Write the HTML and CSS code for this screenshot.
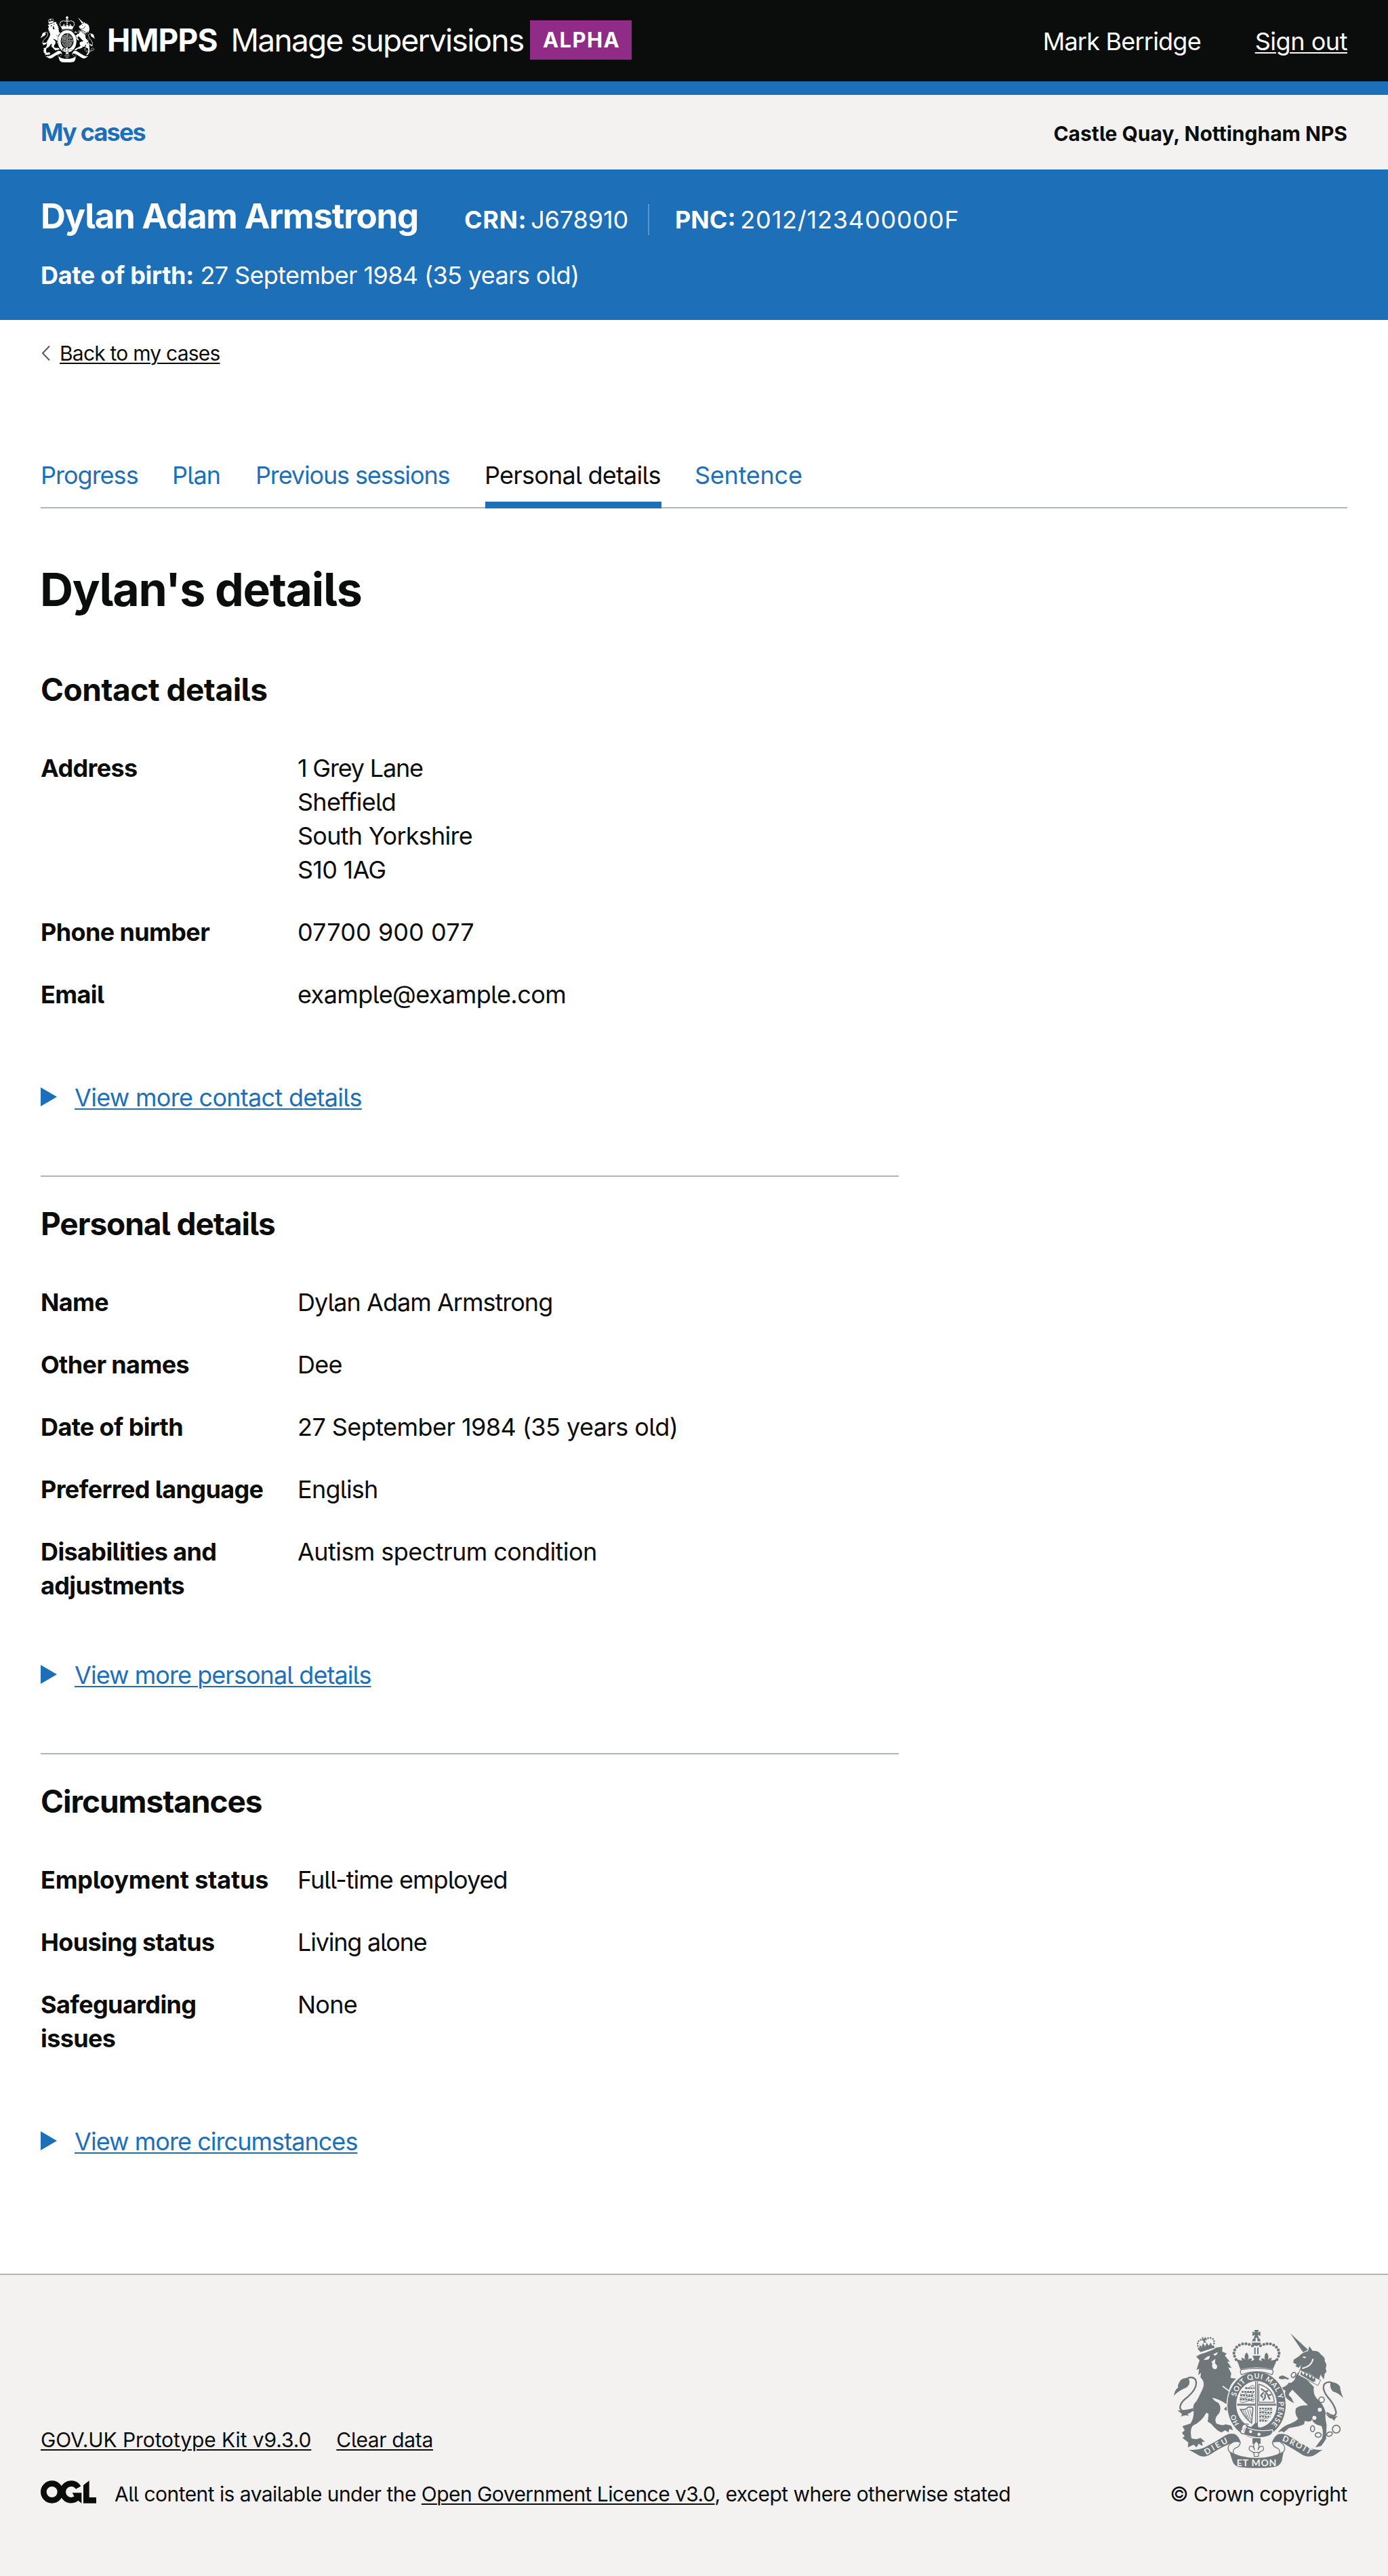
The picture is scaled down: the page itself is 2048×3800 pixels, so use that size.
FILE: index.html
```html
<!DOCTYPE html>
<html lang="en">
<head>
<meta charset="utf-8">
<title>Dylan's details - Manage supervisions</title>
<link rel="stylesheet" href="styles.css">
</head>
<body>
<svg class="sprite" aria-hidden="true">
  <symbol id="arms" viewBox="96 108 750 612" preserveAspectRatio="none">
    <!-- lion -->
    <g fill="currentColor">
      <path d="M195 226 L212 216 Q260 202 285 186 L311 182 L310 204 L330 212 L322 222 L345 250 L332 247 L352 277 L337 274 L350 300 L347 320 L372 324 Q346 345 340 375 L360 392 Q376 420 372 462 L358 452 L352 470 L340 458 L328 466 L318 458 L334 440 Q300 415 266 408 Q274 424 292 430 Q310 450 296 478 Q272 500 284 522 Q310 534 326 526 L350 532 L358 552 L342 546 L338 562 L324 552 L306 562 Q284 552 262 524 L246 514 L250 480 L240 474 Q220 514 180 532 Q166 548 174 588 L196 592 L214 586 L234 602 L220 604 L224 622 L206 612 L196 628 L184 616 L158 628 L160 606 L134 586 L144 578 L132 564 L144 552 L134 534 L170 522 Q184 500 184 470 Q176 440 196 424 Q204 410 222 372 Q238 340 214 318 L216 298 L204 308 L208 280 L196 286 L210 242 Z"/>
      <path d="M202 192 L272 176 L278 186 L214 206 Z"/>
      <path d="M96 400 Q100 372 116 362 Q108 358 126 330 Q148 314 163 326 Q172 348 150 364 Q112 380 96 400Z"/>
      <path d="M112 464 Q140 466 184 454 Q176 476 156 480 L164 488 Q144 482 128 492 L132 480 Z"/>
      <path d="M220 140 h6 v6 h6 v-6 h6 v6 l-3 4 v8 l5 6 h-14 l3 -8 -8 -2 v-6 z"/>
      <path d="M208 190 l4 -16 6 10 8 -18 8 16 8 -18 8 14 10 -14 6 16 z"/>
    </g>
    <g fill="none" stroke="currentColor">
      <path stroke-width="7" d="M190 462 Q136 478 124 456 Q120 430 158 404 Q206 362 192 328 Q178 310 152 324"/>
      <path stroke-width="8" stroke-linecap="round" stroke-dasharray="0 11" d="M206 190 Q194 160 214 152 Q226 148 232 160 Q240 140 262 144 Q280 150 272 178"/>
    </g>
    <g fill="var(--arms-gap)">
      <path d="M228 240 Q240 226 256 222 L252 236 Q240 242 228 240Z"/>
      <path d="M270 216 L290 206 Q290 216 278 222Z"/>
      <path d="M262 250 L280 236 L278 256 Q292 266 286 278 Q276 286 268 276 Q262 262 268 258Z"/>
    </g>
    <path fill="none" stroke="var(--arms-gap)" stroke-width="5" d="M312 357 Q340 376 362 398"/>
    <!-- unicorn -->
    <g fill="currentColor">
      <path d="M611 122 L690 196 L668 207 Z"/>
      <path d="M650 224 Q668 206 690 202 L696 180 L710 200 Q740 200 746 216 Q768 230 764 246 Q776 262 768 278 Q776 296 764 300 L760 328 L746 306 L738 330 Q700 296 658 290 Q652 280 660 262 L648 276 L634 268 L640 260 L625 254 L626 240 Z"/>
      <path d="M650 294 Q636 304 630 330 Q610 350 604 338 Q606 326 586 324 Q574 330 560 322 Q562 310 580 310 L612 326 Q600 360 574 362 Q570 372 590 376 L586 400 Q600 420 628 432 L616 408 L604 396 L620 372 L640 392 Q668 420 690 442 Q650 440 636 456 Q630 482 646 500 Q640 512 598 528 Q572 540 556 562 L574 556 L582 562 L606 542 Q652 536 672 526 L676 510 Q700 520 708 504 Q712 526 750 534 Q760 560 752 588 L722 628 L748 622 Q760 606 770 590 L772 528 Q764 494 768 474 Q760 440 738 420 Q710 400 716 360 Z"/>
      <path d="M790 340 Q820 338 832 360 Q832 376 846 410 Q826 386 800 380 Q784 364 790 340Z"/>
      <path d="M766 474 Q780 492 822 490 L812 498 L806 510 L796 500 Q784 504 766 474Z"/>
    </g>
    <path fill="none" stroke="currentColor" stroke-width="7" d="M772 474 Q816 502 814 470 Q806 436 776 404 Q748 364 764 346 Q780 332 802 344"/>
    <path fill="var(--arms-gap)" stroke="currentColor" stroke-width="3" d="M654 284 L746 330 L734 354 L646 308Z"/>
    <path fill="currentColor" d="M656 306 l4 -16 9 18 8 -14 6 20 9 -14 6 21 10 -12 4 17 10 -11 0 20 -10 3z"/>
    <path fill="none" stroke="var(--arms-gap)" stroke-width="6" d="M664 278 Q706 270 712 236 M668 228 l12 2"/>
    <g fill="none" stroke="currentColor" stroke-width="5">
      <ellipse cx="626" cy="307" rx="9" ry="12" transform="rotate(35 626 307)"/>
      <ellipse cx="710" cy="545" rx="9" ry="13"/>
      <ellipse cx="735" cy="573" rx="13" ry="10"/>
      <ellipse cx="785" cy="569" rx="13" ry="9" transform="rotate(-20 785 569)"/>
      <circle cx="815" cy="547" r="17"/>
      <circle cx="750" cy="417" r="12"/>
    </g>
    <g fill="var(--arms-gap)">
      <circle cx="608" cy="332" r="8"/><circle cx="617" cy="392" r="10"/>
      <circle cx="742" cy="461" r="9"/><circle cx="718" cy="497" r="9"/><circle cx="750" cy="417" r="9"/>
    </g>
    <!-- garter and shield -->
    <ellipse cx="462" cy="440" rx="133" ry="150" fill="var(--arms-gap)"/>
    <ellipse cx="462" cy="440" rx="129" ry="147" fill="currentColor"/>
    <ellipse cx="462" cy="438" rx="90" ry="104" fill="var(--arms-gap)"/>
    <g fill="none" stroke="currentColor" stroke-width="4">
      <path d="M458 336 V436 H376 M466 336 V436 H550 M458 542 V441 H376 M466 542 V441 H550"/>
      <path d="M472 348 V428 H541 Q536 366 472 348"/>
      <path stroke-width="8" stroke-dasharray="9 3" d="M412 366 h42 M396 382 h56 M390 398 h62 M388 416 h64 M474 456 h60 M474 474 h58 M474 492 h50 M474 510 h38"/>
      <path stroke-width="3" d="M414 360 q10 12 20 0 t20 0 M390 390 q12 10 24 0 t34 0 M388 407 q14 9 28 0 t34 0 M388 425 q14 9 28 0 t34 0 M474 465 q14 8 28 0 t30 0 M474 483 q14 8 28 0 t24 0 M474 501 q12 8 22 0 t18 0"/>
      <path stroke-width="7" d="M482 368 l20 14 12 -6 M494 384 l-12 14 8 10 M502 382 l12 16 14 -4 M500 390 l0 18 -10 12 M512 400 l10 16"/>
      <path stroke-width="5" d="M391 460 Q414 464 424 450 Q444 446 446 456 L440 520 Q412 500 391 460Z"/>
      <path stroke-width="3" d="M402 464 L420 496 M412 464 L428 504 M422 460 L436 508 M432 458 L440 490"/>
    </g>
    <path fill="currentColor" d="M456 520 h12 v16 l18 8 -16 10 h-20 l-18 -10z"/>
    <!-- belt end and buckle -->
    <path fill="currentColor" stroke="var(--arms-gap)" stroke-width="4" d="M414 538 Q470 562 532 550 Q540 560 524 574 Q480 596 404 572Z"/>
    <path fill="none" stroke="var(--arms-gap)" stroke-width="12" d="M414 530 q-18 10 -14 36"/>
    <path fill="none" stroke="currentColor" stroke-width="4" d="M428 526 q-30 -8 -34 12 q10 8 -4 14 q0 18 18 16 M424 536 q-10 12 -8 26"/>
    <circle cx="436" cy="558" r="7" fill="var(--arms-gap)"/><circle cx="473" cy="570" r="7" fill="var(--arms-gap)"/>
    <!-- crown -->
    <g fill="currentColor">
      <path d="M452 108 h20 l-5 12 12 -5 v20 l-12 -5 5 13 h-22 l5 -13 -11 5 v-20 l11 5z"/>
      <path d="M442 158 q4 -14 16 -16 v16z M466 158 v-16 q12 2 14 16z M440 164 h42 q-4 14 -21 15 q-17 -1 -21 -15z"/>
      <path d="M452 186 h6 v30 h-6z M465 186 h6 v30 h-6z"/>
      <path d="M372 238 L398 244 L394 232 Q404 230 412 240 Q404 222 418 208 Q432 222 424 240 Q432 230 442 236 L438 246 L452 240 L444 222 L480 222 L472 240 L486 246 L482 236 Q492 230 500 240 Q492 222 506 208 Q520 222 512 240 Q520 230 530 232 L526 244 L553 238 Q544 262 534 282 Q462 266 390 282 Q382 256 372 238Z"/>
    </g>
    <g fill="none" stroke="currentColor">
      <path stroke-width="13" stroke-linecap="round" stroke-dasharray="0 15" d="M444 178 Q418 164 392 172 Q362 186 362 214 Q364 226 372 240 M480 178 Q506 164 532 172 Q562 186 562 214 Q560 226 552 240"/>
      <path fill="var(--arms-gap)" stroke-width="4" d="M394 284 Q462 272 532 284 Q540 294 530 306 Q462 280 396 306 Q386 294 394 284Z"/>
    </g>
    <!-- motto ribbon -->
    <g fill="currentColor">
      <path d="M162 638 Q198 642 228 630 Q280 604 322 576 Q344 562 368 570 Q388 584 392 608 Q372 600 354 608 Q306 626 262 656 Q238 674 212 666 Z"/>
      <path d="M754 638 Q722 642 696 630 Q646 604 600 574 Q578 564 556 570 Q536 584 530 608 Q556 600 578 608 Q624 634 668 662 Q700 676 722 660 Z"/>
      <path d="M342 646 Q390 674 462 675 Q534 674 582 646 L574 688 Q564 712 540 715 Q462 724 384 715 Q360 708 354 684 Z"/>
      <path d="M444 588 h36 v24 h-36z"/>
    </g>
    <g fill="none" stroke="currentColor" stroke-width="4">
      <path d="M356 606 Q328 620 340 644 Q350 656 372 662 M390 604 Q390 626 366 632 Q352 644 364 658"/>
      <path d="M568 606 Q594 620 584 644 Q574 656 552 662 M532 604 Q534 626 556 632 Q572 644 560 658"/>
    </g>
    <path fill="var(--arms-gap)" stroke="currentColor" stroke-width="4" d="M461 600 Q480 614 468 640 Q478 616 490 624 Q500 640 484 644 Q476 648 472 652 L470 668 H452 L450 652 Q446 648 438 644 Q424 640 432 624 Q446 616 454 640 Q442 614 461 600Z"/>
    <path fill="none" stroke="currentColor" stroke-width="4" d="M444 650 H478"/>
  </symbol>
</svg>

<header class="header">
  <svg class="header-crest"><use href="#arms"/></svg>
  <span class="header-org">HMPPS</span>
  <span class="header-product">Manage supervisions</span>
  <strong class="tag">ALPHA</strong>
  <div class="header-account">
    <span class="user">Mark Berridge</span>
    <a class="sign-out" href="#">Sign out</a>
  </div>
</header>

<nav class="primary-nav">
  <a class="primary-link" href="#">My cases</a>
  <span class="office">Castle Quay, Nottingham NPS</span>
</nav>

<section class="banner">
  <div class="banner-row">
    <strong class="banner-name">Dylan Adam Armstrong</strong>
    <span class="banner-crn"><b>CRN:</b> <span>J678910</span></span>
    <span class="banner-pnc"><b>PNC:</b> <span>2012/123400000F</span></span>
  </div>
  <div class="banner-dob"><b>Date of birth:</b> <span>27 September 1984 (35 years old)</span></div>
</section>

<main class="main">
  <a class="back" href="#">
    <svg class="back-icon" viewBox="0 0 14 24"><path d="M13 1.5 L3 12 L13 22.500"/></svg>
    <span>Back to my cases</span>
  </a>

  <nav class="tabs">
    <a class="tab tab-progress" href="#">Progress</a>
    <a class="tab tab-plan" href="#">Plan</a>
    <a class="tab tab-sessions" href="#">Previous sessions</a>
    <a class="tab tab-personal tab-active" href="#">Personal details</a>
    <a class="tab tab-sentence" href="#">Sentence</a>
  </nav>

  <h1>Dylan's details</h1>

  <section class="group">
    <h2 class="h-contact">Contact details</h2>
    <dl>
      <dt>Address</dt><dd><span class="tighter">1 Grey Lane</span><br>Sheffield<br>South Yorkshire<br>S10 1AG</dd>
      <dt>Phone number</dt><dd class="digits">07700 900 077</dd>
      <dt>Email</dt><dd class="wide">example@example.com</dd>
    </dl>
    <a class="more" href="#"><span>View more contact details</span></a>
  </section>

  <section class="group group-compact">
    <h2 class="h-personal">Personal details</h2>
    <dl>
      <dt>Name</dt><dd class="tight">Dylan Adam Armstrong</dd>
      <dt>Other names</dt><dd>Dee</dd>
      <dt>Date of birth</dt><dd class="wide">27 September 1984 (35 years old)</dd>
      <dt>Preferred language</dt><dd>English</dd>
      <dt>Disabilities and adjustments</dt><dd class="wide">Autism spectrum condition</dd>
    </dl>
    <a class="more more-tight" href="#"><span>View more personal details</span></a>
  </section>

  <section class="group">
    <h2 class="h-circumstances">Circumstances</h2>
    <dl>
      <dt class="wide-label">Employment status</dt><dd class="tight">Full-time employed</dd>
      <dt>Housing status</dt><dd class="tighter">Living alone</dd>
      <dt>Safeguarding issues</dt><dd>None</dd>
    </dl>
    <a class="more more-tight" href="#"><span>View more circumstances</span></a>
  </section>
</main>

<footer class="footer">
  <div class="footer-meta">
    <div class="footer-links"><a class="kit" href="#">GOV.UK Prototype Kit v9.3.0</a><a class="clear" href="#">Clear data</a></div>
    <div class="licence">
      <svg class="ogl" viewBox="60 60 246 100" role="img" aria-label="OGL">
        <circle cx="110" cy="110" r="37" fill="none" stroke="currentColor" stroke-width="26"/>
        <path d="M227 91 A37 37 0 1 0 223 134" fill="none" stroke="currentColor" stroke-width="26"/>
        <path d="M200 114 H241 V160 L226 148 L212 136 Z M249 80 L275 60 V134 H306 V160 H249 Z" fill="currentColor"/>
      </svg>
      <span>All content is available under the <a href="#">Open Government Licence v3.0</a>, except where otherwise stated</span>
    </div>
  </div>
  <div class="copyright">
    <svg class="footer-crest" viewBox="96 108 750 612">
      <defs>
        <path id="garter-main" d="M371 404 A97 115 0 1 1 520 532"/>
        <path id="garter-start" d="M386 524 A97 115 0 0 1 364 456"/>
        <path id="ribbon-left" d="M240 662 Q290 630 345 602"/>
        <path id="ribbon-right" d="M574 598 Q636 622 704 664"/>
      </defs>
      <use href="#arms" x="96" y="108" width="750" height="612"/>
      <g class="motto">
        <text font-size="32"><textPath href="#garter-main" textLength="394">SOIT QUI MAL Y PENSE</textPath></text>
        <text font-size="30"><textPath href="#garter-start">HO</textPath></text>
        <text font-size="36"><textPath href="#ribbon-left" textLength="112">DIEU</textPath></text>
        <text font-size="36"><textPath href="#ribbon-right" textLength="138">DROIT</textPath></text>
        <text x="374" y="710" font-size="42" textLength="176">ET MON</text>
      </g>
    </svg>
    <span>© Crown copyright</span>
  </div>
</footer>
</body>
</html>
```
FILE: styles.css
```css
* { box-sizing: border-box; }

body {
  margin: 0;
  background: #fff;
  color: #0b0c0c;
  font: 400 36px/50px Inter, "Noto Sans", sans-serif;
  font-feature-settings: "cv05" 1;
  letter-spacing: -0.75px;
}

a {
  color: inherit;
  text-decoration-thickness: 2px;
  text-underline-offset: 3px;
}

.sprite { position: absolute; width: 0; height: 0; }

/* Header */
.header {
  --arms-gap: #0b0c0c;
  display: flex;
  align-items: flex-start;
  height: 140px;
  padding: 34px 60px 0;
  border-bottom: 20px solid #1d70b8;
  background: #0b0c0c;
  color: #fff;
  white-space: nowrap;
}
.header-crest { width: 80px; height: 68px; margin: -10px 18px 0 0; }
.header-org { width: 182.5px; font-size: 46px; font-weight: 700; letter-spacing: -0.84px; }
.header-product { width: 441.5px; font-size: 46px; letter-spacing: -1.7px; }
.tag {
  width: 150px;
  height: 58px;
  margin-top: -4px;
  padding-left: 19px;
  background: #912b88;
  font-size: 31px;
  line-height: 58px;
  letter-spacing: 1.4px;
}
.header-account { display: flex; margin: 2px 0 0 auto; }
.user { width: 313px; letter-spacing: -0.78px; }
.sign-out { letter-spacing: -0.45px; }

/* Primary navigation */
.primary-nav {
  display: flex;
  justify-content: space-between;
  align-items: baseline;
  height: 110px;
  padding: 30px 60px 0;
  background: #f3f2f1;
  font-weight: 700;
}
.primary-link { color: #1d70b8; text-decoration: none; letter-spacing: -1.8px; }
.office { font-size: 30px; letter-spacing: 0; }

/* Person banner */
.banner {
  height: 222px;
  padding: 39px 60px 0;
  background: #1d70b8;
  color: #fff;
  white-space: nowrap;
}
.banner-row { display: flex; align-items: baseline; height: 60px; line-height: 60px; }
.banner-name { width: 625px; font-size: 51px; letter-spacing: -1.25px; }
.banner-crn {
  width: 273px;
  margin-right: 38px;
  border-right: 2px solid #5694ca;
  line-height: 46px;
  letter-spacing: -0.1px;
  word-spacing: -4px;
}
.banner-crn b { letter-spacing: 0.6px; }
.banner-pnc { letter-spacing: 0.8px; word-spacing: -4px; }
.banner-pnc b { letter-spacing: 0; }
.banner-dob { margin-top: 32px; letter-spacing: -0.63px; }
.banner-dob b { letter-spacing: -0.3px; }

/* Main */
.main { display: flex; flex-direction: column; padding: 29px 60px 0; }
.back {
  display: flex;
  align-items: center;
  align-self: flex-start;
  gap: 14px;
  font-size: 30px;
  line-height: 40px;
  letter-spacing: -0.78px;
}
.back-icon { width: 14px; height: 24px; fill: none; stroke: #505a5f; stroke-width: 2; }

.tabs {
  display: flex;
  margin-top: 135px;
  box-shadow: inset 0 -2px #b1b4b6;
  white-space: nowrap;
}
.tab {
  padding-bottom: 14px;
  border-bottom: 10px solid transparent;
  color: #1d70b8;
  text-decoration: none;
}
.tab-progress { width: 143px; margin-right: 51px; letter-spacing: -0.99px; }
.tab-plan { width: 73px; margin-right: 50px; }
.tab-sessions { width: 289px; margin-right: 50px; letter-spacing: -1.14px; }
.tab-personal { width: 260px; margin-right: 49px; letter-spacing: -0.78px; text-indent: -1px; }
.tab-sentence { letter-spacing: -0.24px; }
.tab-active { border-color: #1d70b8; color: #0b0c0c; }

h1 { margin: 79px 0 0 -1px; font-size: 68px; line-height: 80px; letter-spacing: -1.3px; }
h2 { margin: 0 0 66px; font-size: 46px; line-height: 50px; }
.h-contact { letter-spacing: -0.5px; }
.h-personal { letter-spacing: -1.05px; }
.h-circumstances { letter-spacing: -1.05px; }

.group { display: flex; flex-direction: column; width: 1266px; padding-top: 44px; }
.group + .group { margin-top: 90px; border-top: 2px solid #b1b4b6; }
h1 + .group { padding-top: 83px; }

dl {
  display: grid;
  grid-template-columns: 340px 1fr;
  gap: 42px 39px;
  margin: 0 0 102px;
}
dt { font-weight: 700; letter-spacing: -0.62px; }
dd { margin: 0; }
.group-compact dl { margin-bottom: 82px; }
.wide-label { letter-spacing: -0.2px; }
.tight { letter-spacing: -0.98px; }
.tighter { letter-spacing: -1.2px; }
.wide { letter-spacing: -0.56px; }
.digits { letter-spacing: 0.08px; }

.more {
  display: flex;
  align-items: center;
  align-self: flex-start;
  color: #1d70b8;
  letter-spacing: -0.71px;
}
.more-tight { letter-spacing: -0.95px; }
.more::before {
  content: "";
  width: 24px;
  height: 28px;
  margin: -2px 26px 0 0;
  background: #1d70b8;
  clip-path: polygon(0 0, 100% 50%, 0 100%);
}

/* Footer */
.footer {
  --arms-gap: #f3f2f1;
  display: flex;
  justify-content: space-between;
  align-items: flex-end;
  height: 446px;
  margin-top: 170px;
  padding: 0 60px 101px;
  border-top: 2px solid #b1b4b6;
  background: #f3f2f1;
  font-size: 30px;
  line-height: 40px;
  letter-spacing: -0.55px;
  white-space: nowrap;
}
.footer-links { display: flex; margin-bottom: 40px; }
.kit { margin-right: 37px; letter-spacing: -0.1px; }
.clear { letter-spacing: -0.35px; }
.licence { display: flex; }
.ogl { width: 82px; height: 34px; margin-right: 27px; }
.copyright {
  display: flex;
  flex-direction: column;
  align-items: center;
  width: 262px;
  letter-spacing: -0.6px;
}
.footer-crest { width: 250px; height: 204px; margin-bottom: 18px; color: #6f777b; }
.motto { fill: #f3f2f1; font-family: Lato, sans-serif; font-weight: 700; letter-spacing: 0; }
```
